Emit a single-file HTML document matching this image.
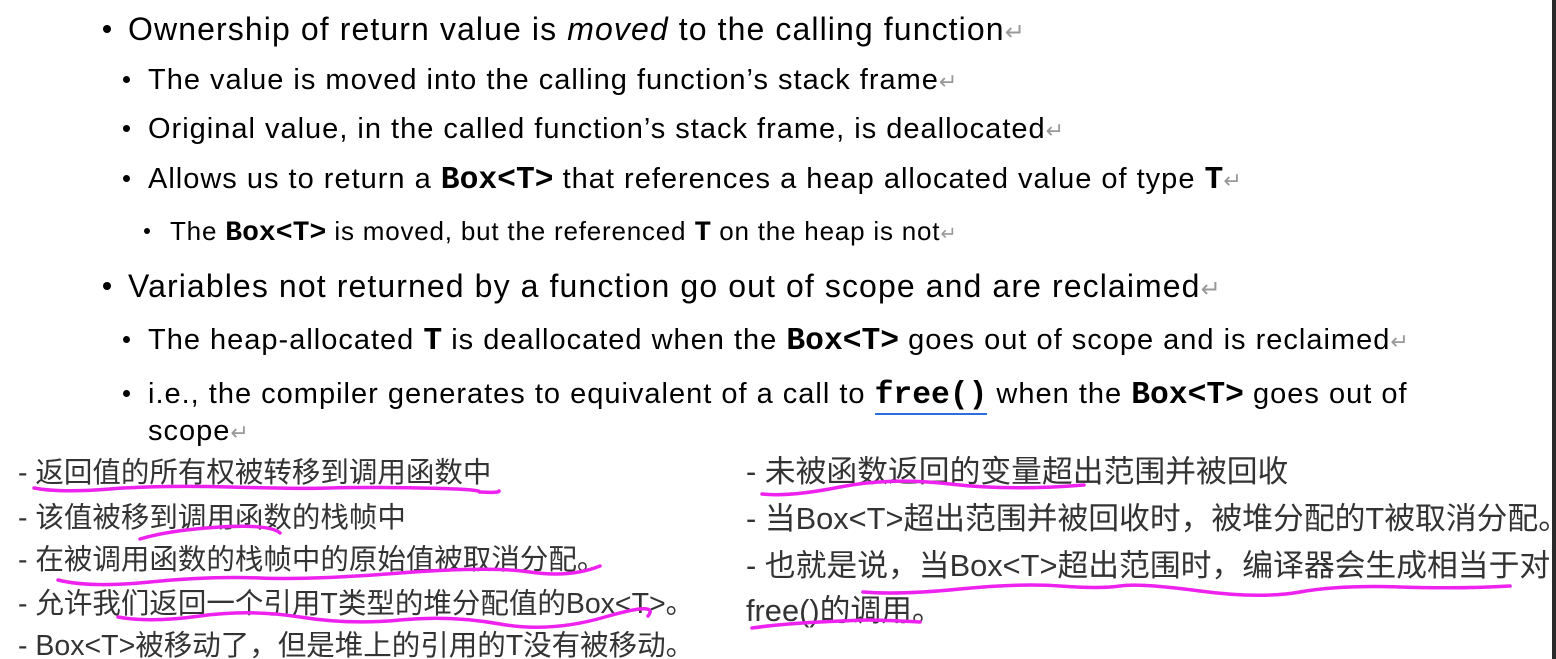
<!DOCTYPE html>
<html><head><meta charset="utf-8"><style>
html,body{margin:0;padding:0;background:#fff;width:1556px;height:659px;overflow:hidden;position:relative}
.l{position:absolute;white-space:nowrap;font-family:"Liberation Sans",Arial,sans-serif;color:#000}
.d{position:absolute;border-radius:50%;background:#000}
.m{font-family:"Liberation Mono","Courier New",monospace;font-weight:bold;letter-spacing:0;font-size:1.08em}
.r{color:#999;font-size:0.75em;letter-spacing:0}
.f1{font-size:32px;line-height:32px;letter-spacing:1.1px}
.f2{font-size:29px;line-height:29px;letter-spacing:1px}
.f3{font-size:26px;line-height:26px;letter-spacing:0.8px}
.c{position:absolute;white-space:nowrap;font-family:"Liberation Sans","Noto Sans CJK SC",sans-serif;font-size:28.5px;line-height:30px;color:#333}
.c2{font-size:30.8px;line-height:32px}
.bar{position:absolute;left:1552px;top:0;width:4px;height:659px;background:#2a2a2a}
</style></head><body>
<div class="d" style="left:103px;top:25px;width:8px;height:8px"></div>
<div class="l f1" style="left:128px;top:13px">Ownership of return value is <i>moved</i> to the calling function<span class="r">↵</span></div>
<div class="d" style="left:123px;top:76px;width:7px;height:7px"></div>
<div class="l f2" style="left:148px;top:66px">The value is moved into the calling function’s stack frame<span class="r">↵</span></div>
<div class="d" style="left:123px;top:125px;width:7px;height:7px"></div>
<div class="l f2" style="left:148px;top:115px">Original value, in the called function’s stack frame, is deallocated<span class="r">↵</span></div>
<div class="d" style="left:123px;top:175px;width:7px;height:7px"></div>
<div class="l f2" style="left:148px;top:165px">Allows us to return a <span class="m">Box&lt;T&gt;</span> that references a heap allocated value of type <span class="m">T</span><span class="r">↵</span></div>
<div class="d" style="left:144px;top:228px;width:6px;height:6px"></div>
<div class="l f3" style="left:170px;top:218px">The <span class="m">Box&lt;T&gt;</span> is moved, but the referenced <span class="m">T</span> on the heap is not<span class="r">↵</span></div>
<div class="d" style="left:103px;top:282px;width:8px;height:8px"></div>
<div class="l f1" style="left:128px;top:270px">Variables not returned by a function go out of scope and are reclaimed<span class="r">↵</span></div>
<div class="d" style="left:123px;top:336px;width:7px;height:7px"></div>
<div class="l f2" style="left:148px;top:326px">The heap-allocated <span class="m">T</span> is deallocated when the <span class="m">Box&lt;T&gt;</span> goes out of scope and is reclaimed<span class="r">↵</span></div>
<div class="d" style="left:123px;top:390px;width:7px;height:7px"></div>
<div class="l f2" style="left:148px;top:380px">i.e., the compiler generates to equivalent of a call to <span class="m" style="border-bottom:2px solid #2b6ee0">free()</span> when the <span class="m">Box&lt;T&gt;</span> goes out of</div>
<div class="l f2" style="left:148px;top:417px">scope<span class="r">↵</span></div>

<div class="c" style="left:18px;top:458px">- 返回值的所有权被转移到调用函数中</div>
<div class="c" style="left:18px;top:503px">- 该值被移到调用函数的栈帧中</div>
<div class="c" style="left:18px;top:545px">- 在被调用函数的栈帧中的原始值被取消分配。</div>
<div class="c" style="left:18px;top:589px">- 允许我们返回一个引用T类型的堆分配值的Box&lt;T&gt;。</div>
<div class="c" style="left:18px;top:631px">- Box&lt;T&gt;被移动了，但是堆上的引用的T没有被移动。</div>
<div class="c c2" style="left:746px;top:456px">- 未被函数返回的变量超出范围并被回收</div>
<div class="c c2" style="left:746px;top:503px">- 当Box&lt;T&gt;超出范围并被回收时，被堆分配的T被取消分配。</div>
<div class="c c2" style="left:746px;top:550px">- 也就是说，当Box&lt;T&gt;超出范围时，编译器会生成相当于对</div>
<div class="c c2" style="left:746px;top:595px">free()的调用。</div>

<svg style="position:absolute;left:0;top:0" width="1556" height="659">
<g fill="none" stroke="#ee22ee" stroke-width="3.5" stroke-linecap="round">
<path d="M34 488 Q60 493 110 489 T230 487 T330 488 T420 488 T480 492 Q500 493 499 491"/>
<path d="M140 539 Q170 530 220 527 T280 533"/>
<path d="M58 580 Q90 588 150 582 T260 578 T400 573 T530 572 T600 566"/>
<path d="M118 617 Q150 623 200 616 T300 617 T400 620 T500 624 T605 617 T648 616"/>
<path d="M762 494 Q790 497 840 487 T950 484 T1084 485"/>
<path d="M863 592 Q900 595 960 589 T1060 586 T1120 586 T1200 591 T1300 592 T1400 587 T1510 586"/>
<path d="M752 628 Q780 624 820 622 T870 620 T920 622"/>
</g>
</svg>
<div class="bar"></div>
</body></html>
